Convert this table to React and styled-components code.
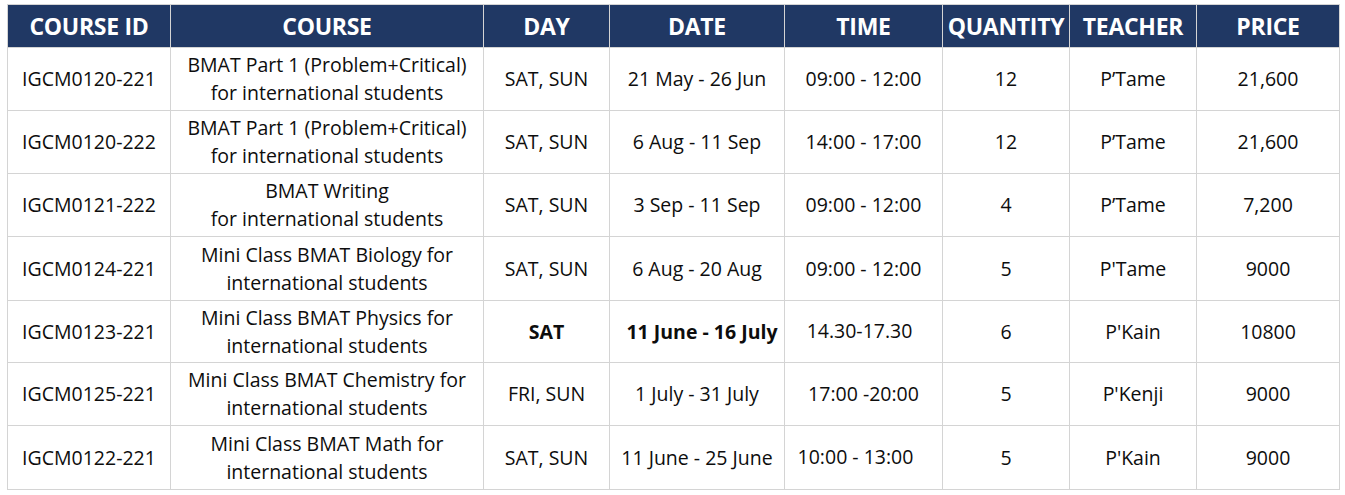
import React from "react";
import styled, { createGlobalStyle } from "styled-components";

const GlobalStyle = createGlobalStyle`
  body {
    margin: 0;
    padding: 4px 0 0 7px;
    background: #ffffff;
    font-family: "Open Sans", "Liberation Sans", sans-serif;
  }
`;

const columns = ["COURSE ID", "COURSE", "DAY", "DATE", "TIME", "QUANTITY", "TEACHER", "PRICE"];

// shift: [x, y] offset of the text from the cell centre, where the sheet isn't centred
const rows = [
  { id: "IGCM0120-221", course: ["BMAT Part 1 (Problem+Critical)", "for international students"], day: "SAT, SUN", date: "21 May - 26 Jun", time: "09:00 - 12:00", qty: "12", teacher: "P’Tame", price: "21,600" },
  { id: "IGCM0120-222", course: ["BMAT Part 1 (Problem+Critical)", "for international students"], day: "SAT, SUN", date: "6 Aug - 11 Sep", time: "14:00 - 17:00", qty: "12", teacher: "P’Tame", price: "21,600" },
  { id: "IGCM0121-222", course: ["BMAT Writing", "for international students"], day: "SAT, SUN", date: "3 Sep - 11 Sep", time: "09:00 - 12:00", qty: "4", teacher: "P’Tame", price: "7,200" },
  { id: "IGCM0124-221", course: ["Mini Class BMAT Biology for", "international students"], day: "SAT, SUN", date: "6 Aug - 20 Aug", time: "09:00 - 12:00", qty: "5", teacher: "P'Tame", price: "9000" },
  { id: "IGCM0123-221", course: ["Mini Class BMAT Physics for", "international students"], day: "SAT", date: "11 June - 16 July", time: "14.30-17.30", qty: "6", teacher: "P'Kain", price: "10800", bold: true, dateShift: [5, 0], timeShift: [-4, -1] },
  { id: "IGCM0125-221", course: ["Mini Class BMAT Chemistry for", "international students"], day: "FRI, SUN", date: "1 July - 31 July", time: "17:00 -20:00", qty: "5", teacher: "P'Kenji", price: "9000" },
  { id: "IGCM0122-221", course: ["Mini Class BMAT Math for", "international students"], day: "SAT, SUN", date: "11 June - 25 June", time: "10:00 - 13:00", qty: "5", teacher: "P'Kain", price: "9000", timeShift: [-8, -1] },
];

const App = () => {
  return (
    <>
      <GlobalStyle />
      <Table>
        {columns.map((c) => (
          <HeadCell key={c}>{c}</HeadCell>
        ))}
        {rows.map((r) => (
          <React.Fragment key={r.id}>
            <Cell>{r.id}</Cell>
            <Cell>
              <span>{r.course[0]}</span>
              <span>{r.course[1]}</span>
            </Cell>
            <Cell $bold={r.bold}>{r.day}</Cell>
            <Cell $bold={r.bold} $shift={r.dateShift}>{r.date}</Cell>
            <Cell $shift={r.timeShift}>{r.time}</Cell>
            <Cell>{r.qty}</Cell>
            <Cell>{r.teacher}</Cell>
            <Cell>{r.price}</Cell>
          </React.Fragment>
        ))}
      </Table>
    </>
  );
};

export default App;

const Table = styled.div`
  display: grid;
  grid-template-columns: 162px 312px 125px 174px 157px 126px 126px 142px;
  grid-template-rows: 42px 62px 62px 62px 63px 61px 62px 63px;
  gap: 1px;
  padding: 1px;
  width: max-content;
  background-color: #d4d4d4;
`;

const HeadCell = styled.div`
  background-color: #203864;
  color: #ffffff;
  font-weight: 700;
  font-size: 23px;
  letter-spacing: -0.3px;
  display: flex;
  justify-content: center;
  align-items: center;
  white-space: nowrap;
`;

const Cell = styled.div`
  background-color: #ffffff;
  color: #0d0d0d;
  font-size: 19.5px;
  line-height: 28px;
  font-weight: ${(p) => (p.$bold ? 700 : 400)};
  display: flex;
  flex-direction: column;
  justify-content: center;
  align-items: center;
  text-align: center;
  white-space: nowrap;
  padding-left: ${(p) => (p.$shift ? Math.max(p.$shift[0], 0) * 2 : 0)}px;
  padding-right: ${(p) => (p.$shift ? Math.max(-p.$shift[0], 0) * 2 : 0)}px;
  padding-bottom: ${(p) => (p.$shift ? Math.max(-p.$shift[1], 0) * 2 : 0)}px;
`;
